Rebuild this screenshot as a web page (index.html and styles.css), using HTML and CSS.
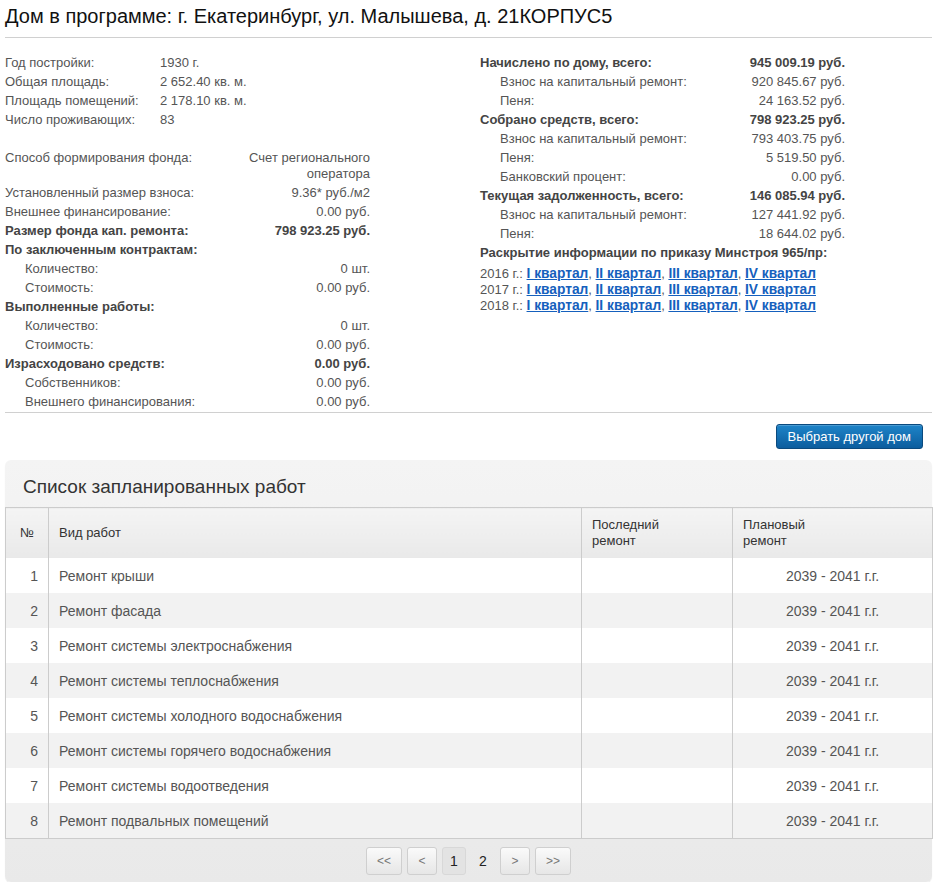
FILE: index.html
```html
<!DOCTYPE html>
<html lang="ru">
<head>
<meta charset="utf-8">
<title>Дом в программе</title>
<link rel="stylesheet" href="styles.css">
</head>
<body>
<div class="page">
  <h1 class="title">Дом в программе: г. Екатеринбург, ул. Малышева, д. 21КОРПУС5</h1>

  <div class="info">
    <div class="col">
      <table class="kv basic">
        <tr><td class="lbl">Год постройки:</td><td>1930 г.</td></tr>
        <tr><td class="lbl">Общая площадь:</td><td>2 652.40 кв. м.</td></tr>
        <tr><td class="lbl">Площадь помещений:</td><td>2 178.10 кв. м.</td></tr>
        <tr><td class="lbl">Число проживающих:</td><td>83</td></tr>
      </table>

      <table class="kv fund">
        <tr><td class="lbl">Способ формирования фонда:</td><td class="val wrap">Счет регионального оператора</td></tr>
        <tr><td class="lbl">Установленный размер взноса:</td><td class="val">9.36* руб./м2</td></tr>
        <tr><td class="lbl">Внешнее финансирование:</td><td class="val">0.00 руб.</td></tr>
        <tr class="b"><td class="lbl">Размер фонда кап. ремонта:</td><td class="val">798 923.25 руб.</td></tr>
        <tr class="b"><td class="lbl" colspan="2">По заключенным контрактам:</td></tr>
        <tr><td class="lbl sub">Количество:</td><td class="val">0 шт.</td></tr>
        <tr><td class="lbl sub">Стоимость:</td><td class="val">0.00 руб.</td></tr>
        <tr class="b"><td class="lbl" colspan="2">Выполненные работы:</td></tr>
        <tr><td class="lbl sub">Количество:</td><td class="val">0 шт.</td></tr>
        <tr><td class="lbl sub">Стоимость:</td><td class="val">0.00 руб.</td></tr>
        <tr class="b"><td class="lbl">Израсходовано средств:</td><td class="val">0.00 руб.</td></tr>
        <tr><td class="lbl sub">Собственников:</td><td class="val">0.00 руб.</td></tr>
        <tr><td class="lbl sub">Внешнего финансирования:</td><td class="val">0.00 руб.</td></tr>
      </table>
    </div>

    <div class="col">
      <table class="kv money">
        <tr class="b"><td class="lbl">Начислено по дому, всего:</td><td class="val">945 009.19 руб.</td></tr>
        <tr><td class="lbl sub">Взнос на капитальный ремонт:</td><td class="val">920 845.67 руб.</td></tr>
        <tr><td class="lbl sub">Пеня:</td><td class="val">24 163.52 руб.</td></tr>
        <tr class="b"><td class="lbl">Собрано средств, всего:</td><td class="val">798 923.25 руб.</td></tr>
        <tr><td class="lbl sub">Взнос на капитальный ремонт:</td><td class="val">793 403.75 руб.</td></tr>
        <tr><td class="lbl sub">Пеня:</td><td class="val">5 519.50 руб.</td></tr>
        <tr><td class="lbl sub">Банковский процент:</td><td class="val">0.00 руб.</td></tr>
        <tr class="b"><td class="lbl">Текущая задолженность, всего:</td><td class="val">146 085.94 руб.</td></tr>
        <tr><td class="lbl sub">Взнос на капитальный ремонт:</td><td class="val">127 441.92 руб.</td></tr>
        <tr><td class="lbl sub">Пеня:</td><td class="val">18 644.02 руб.</td></tr>
        <tr class="b"><td class="lbl" colspan="2">Раскрытие информации по приказу Минстроя 965/пр:</td></tr>
      </table>
      <div class="disclosure">
        <div>2016 г.: <a href="#">I квартал</a>, <a href="#">II квартал</a>, <a href="#">III квартал</a>, <a href="#">IV квартал</a></div>
        <div>2017 г.: <a href="#">I квартал</a>, <a href="#">II квартал</a>, <a href="#">III квартал</a>, <a href="#">IV квартал</a></div>
        <div>2018 г.: <a href="#">I квартал</a>, <a href="#">II квартал</a>, <a href="#">III квартал</a>, <a href="#">IV квартал</a></div>
      </div>
    </div>
  </div>

  <div class="actions">
    <button class="btn-primary" type="button">Выбрать другой дом</button>
  </div>

  <div class="panel">
    <div class="panel-title">Список запланированных работ</div>
    <table class="works">
      <colgroup>
        <col class="c-num"><col class="c-name"><col class="c-last"><col class="c-plan">
      </colgroup>
      <thead>
        <tr><th class="num-h">№</th><th>Вид работ</th><th>Последний<br>ремонт</th><th>Плановый<br>ремонт</th></tr>
      </thead>
      <tbody>
        <tr><td class="num">1</td><td>Ремонт крыши</td><td></td><td class="plan">2039 - 2041 г.г.</td></tr>
        <tr><td class="num">2</td><td>Ремонт фасада</td><td></td><td class="plan">2039 - 2041 г.г.</td></tr>
        <tr><td class="num">3</td><td>Ремонт системы электроснабжения</td><td></td><td class="plan">2039 - 2041 г.г.</td></tr>
        <tr><td class="num">4</td><td>Ремонт системы теплоснабжения</td><td></td><td class="plan">2039 - 2041 г.г.</td></tr>
        <tr><td class="num">5</td><td>Ремонт системы холодного водоснабжения</td><td></td><td class="plan">2039 - 2041 г.г.</td></tr>
        <tr><td class="num">6</td><td>Ремонт системы горячего водоснабжения</td><td></td><td class="plan">2039 - 2041 г.г.</td></tr>
        <tr><td class="num">7</td><td>Ремонт системы водоотведения</td><td></td><td class="plan">2039 - 2041 г.г.</td></tr>
        <tr><td class="num">8</td><td>Ремонт подвальных помещений</td><td></td><td class="plan">2039 - 2041 г.г.</td></tr>
      </tbody>
    </table>
    <div class="pager">
      <span class="pg wide">&lt;&lt;</span>
      <span class="pg">&lt;</span>
      <span class="pg num active">1</span>
      <span class="pg num plain">2</span>
      <span class="pg">&gt;</span>
      <span class="pg wide">&gt;&gt;</span>
    </div>
  </div>
</div>
</body>
</html>
```

FILE: styles.css
```css
html, body {
  margin: 0;
  padding: 0;
  background: #fff;
}
body {
  font-family: "Liberation Sans", Arial, sans-serif;
  font-size: 13px;
  color: #555;
}
.page {
  width: 927px;
  padding: 0 13px 0 5px;
}
.title {
  margin: 0;
  padding: 4px 0 9px;
  font-size: 20px;
  line-height: 24px;
  font-weight: normal;
  color: #111;
  border-bottom: 1px solid #d0d0d0;
}
.info {
  display: grid;
  grid-template-columns: 475px 1fr;
  padding-top: 15px;
  border-bottom: 1px solid #d0d0d0;
  padding-bottom: 1px;
}
.kv {
  border-collapse: collapse;
  width: 365px;
}
.kv td {
  padding: 1.5px 0;
  line-height: 16px;
  vertical-align: top;
  white-space: nowrap;
}
.kv .val {
  text-align: right;
}
.kv .val.wrap {
  white-space: normal;
}
.kv .sub {
  padding-left: 20px;
}
.kv tr.b td {
  font-weight: bold;
  color: #444;
}
.basic {
  margin-bottom: 19px;
}
.basic .lbl {
  width: 155px;
}
.fund .lbl {
  width: 233px;
}
.fund .val.wrap {
  width: 132px;
}
.money .lbl {
  width: 265px;
}
.disclosure {
  margin-top: 4px;
  line-height: 16px;
}
.disclosure a {
  color: #1560bd;
  font-weight: bold;
  font-size: 13.75px;
  text-decoration: underline;
}
.actions {
  display: flex;
  justify-content: flex-end;
  padding-right: 9px;
  margin: 11px 0 11px;
}
.btn-primary {
  font-family: "Liberation Sans", Arial, sans-serif;
  font-size: 13px;
  color: #fff;
  height: 25px;
  padding: 0 11px;
  border: 1px solid #0b4a7e;
  border-radius: 3px;
  background: linear-gradient(#1e84c8, #0c5d9e);
  box-shadow: inset 0 1px 0 rgba(255,255,255,0.2);
}
.panel {
  border-radius: 6px;
  background: linear-gradient(#f4f4f4, #e9e9e9);
  box-shadow: 0 1px 1px rgba(0,0,0,0.08);
}
.panel-title {
  padding: 16px 18px 9px;
  font-size: 19px;
  line-height: 22px;
  color: #333;
}
.works {
  width: 927px;
  border-collapse: collapse;
  table-layout: fixed;
  border: 1px solid #cccccc;
}
.c-num { width: 43px; }
.c-name { width: 533px; }
.c-last { width: 151px; }
.c-plan { width: 200px; }
.works th {
  height: 50px;
  padding: 0 10px;
  text-align: left;
  font-weight: normal;
  font-size: 13px;
  line-height: 16px;
  color: #333;
  background: linear-gradient(#f4f4f4, #e9e9e9);
  border-left: 1px solid #cccccc;
}
.works th.num-h {
  text-align: center;
  padding: 0;
}
.works td {
  height: 35px;
  padding: 0 10px;
  font-size: 14px;
  color: #555;
  background: #fff;
  border-left: 1px solid #cccccc;
}
.works tbody tr:nth-child(even) td {
  background: #f2f2f2;
}
.works td.num {
  text-align: right;
}
.works td.plan {
  text-align: center;
}
.pager {
  display: flex;
  justify-content: center;
  gap: 5px;
  padding: 8px 0 7px;
}
.pg {
  box-sizing: border-box;
  height: 28px;
  min-width: 30px;
  display: flex;
  align-items: center;
  justify-content: center;
  border: 1px solid #cfcfcf;
  border-radius: 3px;
  background: linear-gradient(#fafafa, #e6e6e6);
  font-size: 12px;
  color: #777;
}
.pg.wide {
  min-width: 36px;
}
.pg.num {
  min-width: 24px;
  font-size: 14px;
  color: #222;
}
.pg.active {
  background: #e3e3e3;
  border-color: #d8d8d8;
}
.pg.plain {
  background: none;
  border-color: transparent;
}
```
